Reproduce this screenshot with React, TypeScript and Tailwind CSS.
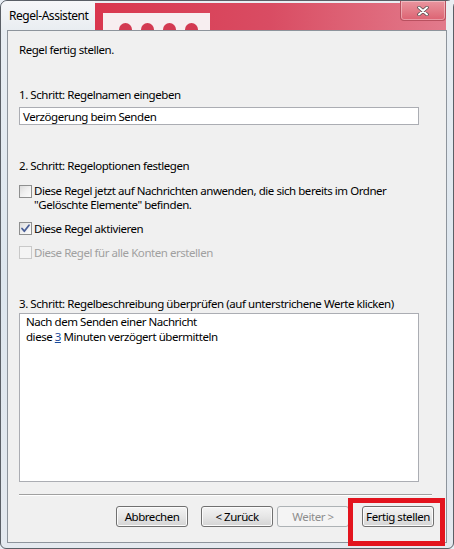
import React from "react";

const font = { fontFamily: '"Noto Sans", "Liberation Sans", sans-serif', letterSpacing: "-0.45px" };

function CheckBox({ checked = false, disabled = false }: { checked?: boolean; disabled?: boolean }) {
  return (
    <div
      className={
        "relative w-[13px] h-[13px] shrink-0 border " +
        (disabled
          ? "border-[#c9c9c9] bg-[#f4f4f4]"
          : "border-[#8e8f8f] bg-gradient-to-br from-[#dcdcdc] via-[#f0f0f0] to-[#fbfbfb]")
      }
    >
      {checked && (
        <svg viewBox="0 0 13 13" className="absolute -left-px -top-px w-[13px] h-[13px]">
          <path d="M3 6.5 L5.3 9.2 L10 3.2" fill="none" stroke="#4a5f97" strokeWidth="1.8" strokeLinecap="round" strokeLinejoin="round" />
        </svg>
      )}
    </div>
  );
}

function Button({ label, disabled = false }: { label: string; disabled?: boolean }) {
  return (
    <div
      className={
        "h-[21px] w-[72px] rounded-[3px] border flex items-center justify-center whitespace-nowrap text-[11.5px] " +
        (disabled
          ? "border-[#adb2b5] bg-[#f4f4f4] text-[#8d8d8d]"
          : "border-[#707070] bg-gradient-to-b from-[#f4f4f4] via-[#e6e6e6] to-[#d4d4d4] text-black shadow-[inset_0_0_0_1px_#fbfbfb]")
      }
    >
      {label}
    </div>
  );
}

export default function App() {
  return (
    <div className="relative w-[454px] h-[549px] overflow-hidden bg-[#e8eef4]" style={font}>
      {/* window frame */}
      <div className="absolute inset-0 rounded-t-[7px] rounded-b-[6px] border border-[#5a5f66] bg-gradient-to-b from-[#e9eef3] via-[#dde6ee] to-[#e4e9ef] flex flex-col">
        {/* title bar */}
        <div className="relative h-[29px] flex shrink-0">
          <div className="w-[94px] flex items-center pl-[8px] text-[12px] text-black whitespace-nowrap bg-gradient-to-b from-[#f6f7f9] to-[#e9edf1] rounded-tl-[7px]">
            Regel-Assistent
          </div>
          <div className="flex-1 mt-[2px] bg-gradient-to-r from-[#d9364e] via-[#d94c63] to-[#e27a8c] flex">
            <div className="ml-[8px] mt-[10px] w-[107px] h-[17px] bg-[#f7eef0] flex items-end gap-[9px] pl-[16px] overflow-hidden">
              <span className="w-[13px] h-[13px] rounded-full bg-[#d33a52] translate-y-[6px]" />
              <span className="w-[13px] h-[13px] rounded-full bg-[#d33a52] translate-y-[6px]" />
              <span className="w-[13px] h-[13px] rounded-full bg-[#d33a52] translate-y-[6px]" />
              <span className="w-[13px] h-[13px] rounded-full bg-[#d33a52] translate-y-[6px]" />
            </div>
          </div>
          <div className="w-[7px] bg-[#e9edf1]" />
          {/* close button */}
          <div className="absolute right-[7px] top-0 w-[46px] h-[20px] rounded-b-[4px] border border-t-0 border-[#b8505f] bg-gradient-to-b from-[#e9959f] to-[#dc6272] flex items-center justify-center shadow-[inset_0_0_0_1px_rgba(255,255,255,0.35)]">
            <svg viewBox="0 0 12 10" className="w-[12px] h-[10px]">
              <path d="M2 1.5 L10 8.5 M10 1.5 L2 8.5" stroke="#4a4a4a" strokeWidth="3.4" strokeLinecap="round" />
              <path d="M2 1.5 L10 8.5 M10 1.5 L2 8.5" stroke="#ffffff" strokeWidth="2" strokeLinecap="round" />
            </svg>
          </div>
        </div>

        {/* client area */}
        <div className="flex-1 mx-[6px] mb-[5px] border border-[#8d949c] bg-[#f0f0f0] flex flex-col pl-[11px] text-[11.5px] leading-[15px] text-black">
          <div className="h-[37px] flex items-center pb-[1px]">Regel fertig stellen.</div>

          <div className="mt-[18px] h-[16px] flex items-center">1. Schritt: Regelnamen eingeben</div>
          <div className="mt-[5px] w-[400px] h-[18px] border border-[#abadb3] bg-white flex items-center pl-[3px]">
            Verzögerung beim Senden
          </div>

          <div className="mt-[32px] h-[16px] flex items-center">2. Schritt: Regeloptionen festlegen</div>
          <div className="mt-[11px] flex gap-[2px]">
            <div className="pt-[1px]"><CheckBox /></div>
            <div className="leading-[14px]">
              Diese Regel jetzt auf Nachrichten anwenden, die sich bereits im Ordner
              <br />
              "Gelöschte Elemente" befinden.
            </div>
          </div>
          <div className="mt-[8px] flex items-center gap-[2px] h-[16px]">
            <CheckBox checked />
            <span>Diese Regel aktivieren</span>
          </div>
          <div className="mt-[8px] flex items-center gap-[2px] h-[16px] text-[#a0a0a0]">
            <CheckBox disabled />
            <span>Diese Regel für alle Konten erstellen</span>
          </div>

          <div className="mt-[35px] h-[16px] flex items-center">
            3. Schritt: Regelbeschreibung überprüfen (auf unterstrichene Werte klicken)
          </div>
          <div className="mt-[2px] w-[400px] h-[169px] border border-[#abadb3] bg-white pl-[6px] pt-0">
            <div>Nach dem Senden einer Nachricht</div>
            <div>
              diese <span className="underline text-[#1a4a9a]">3</span> Minuten verzögert übermitteln
            </div>
          </div>

          <div className="mt-[12px] mr-[14px] h-px bg-[#a0a0a0] border-b border-white box-content" />

          <div className="mt-[10px] flex items-center pl-[97px]">
            <Button label="Abbrechen" />
            <div className="ml-[13px]"><Button label="< Zurück" /></div>
            <div className="ml-[4px]"><Button label="Weiter >" disabled /></div>
            <div className="ml-[13px]"><Button label="Fertig stellen" /></div>
          </div>
        </div>
      </div>

      {/* red highlight marker */}
      <div className="absolute left-[348px] top-[498px] w-[97px] h-[48px] border-[5px] border-[#e3141e]" />
    </div>
  );
}
